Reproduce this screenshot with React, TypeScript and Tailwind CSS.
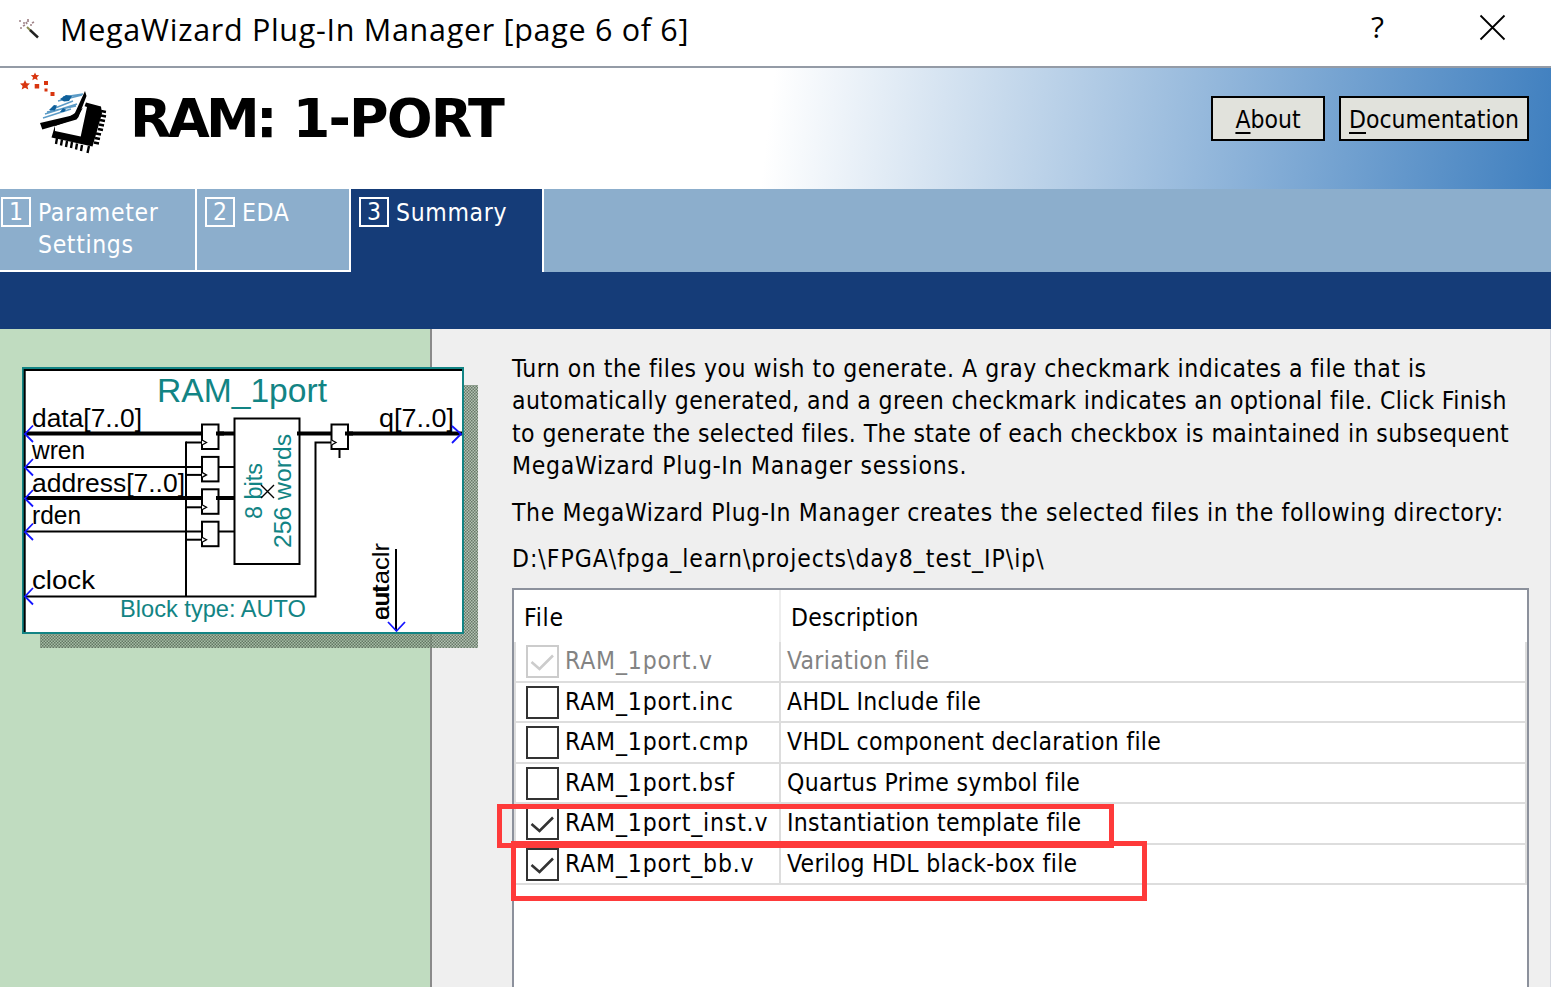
const tabs = [
  { num: 1, label: "Parameter\nSettings", cls: "w-[197px] pl-px border-b-2" },
  { num: 2, label: "EDA", cls: "w-[154px] pl-2 border-b-2" },
  { num: 3, label: "Summary", cls: "w-[193px] pl-2 bg-[#153c78]" },
];

const files = [
  { name: "RAM_1port.v", desc: "Variation file", checked: true, disabled: true },
  { name: "RAM_1port.inc", desc: "AHDL Include file" },
  { name: "RAM_1port.cmp", desc: "VHDL component declaration file" },
  { name: "RAM_1port.bsf", desc: "Quartus Prime symbol file" },
  { name: "RAM_1port_inst.v", desc: "Instantiation template file", checked: true },
  { name: "RAM_1port_bb.v", desc: "Verilog HDL black-box file", checked: true },
];

const ports = [
  { name: "data[7..0]", y: 433.5, bus: true, len: 110 },
  { name: "wren", y: 467, bus: false, len: 53 },
  { name: "address[7..0]", y: 498, bus: true, len: 153 },
  { name: "rden", y: 531.5, bus: false, len: 49 },
];

function WandIcon() {
  return (
    <svg width="22" height="22" viewBox="0 0 22 22" className="shrink-0">
      <path d="M9 9l4 4" stroke="#8a8a50" strokeWidth="2" />
      <path d="M12 12l8 7.500" stroke="#222" strokeWidth="2.400" />
      <path
        d="M1 3h2M5 5h2M10 1v3M14 5l2-1M2 10h2M5 8l2-1M12 7h2M8 4l1 2"
        stroke="#a08488"
        strokeWidth="1.700"
      />
    </svg>
  );
}

function ChipLogo() {
  return (
    <svg width="98" height="98" viewBox="17 68 98 98" className="shrink-0">
      <g fill="#d8350f">
        <path d="M25 80l1.500 3.300 3.500.3-2.600 2.300.9 3.600-3.300-1.800-3.300 1.800.9-3.600-2.600-2.300 3.500-.3z" />
        <path d="M35 72.500l1.200 2.600 3 .2-2.200 2 .7 3-2.700-1.500-2.700 1.500.7-3-2.200-2 3-.2z" />
        <path d="M34.700 84h4.500v4.500h-4.500zM44 81h4v4h-4zM44.500 88.500h3v3h-3zM50.500 92h4v4h-4z" />
      </g>
      <path d="M86 102.500l15 4 1 7-9.500 33-41-9 3.500-12 29-18z" fill="#000" />
      <path d="M55 126l22-8 7-12 3 1-6.300 29.500L55 131z" fill="#fff" />
      <path
        d="M101 111l5 1M101 115.500l5 1M100 120l5 1M99 124.500l5 1M98 129l5 1M96 133.500l5 1M95 138l5 1M94 142.500l5 1M57 138l-1 6M62 139.500l-1 6M67 141l-1 6M72 142l-1 6M77 143.500l-1 6M82 145l-1 6M89 146l-1.500 7"
        stroke="#000"
        strokeWidth="2.400"
      />
      <path
        d="M43 118l28-9M45 114l32-10M50 110l23-9M58 101l24-6M63 97l20-3M47 112l29-6"
        stroke="#5c9bc6"
        strokeWidth="1.400"
      />
      <path d="M60 99l6-4 6 1-3 5-5 .5zM49 110l5-5 3 .5-2 5zM60 112l3-4 3 1.500-2 2.500z" fill="#0f609b" />
      <path d="M40 123l34-8 11-24 1.500 5-8 21-2 2.500-34.200 10z" fill="#000" />
    </svg>
  );
}

function CheckBox({ checked, disabled }: { checked?: boolean; disabled?: boolean }) {
  return (
    <svg
      width="33"
      height="33"
      viewBox="0 0 33 33"
      fill="none"
      className={disabled ? "shrink-0 text-[#cccccc]" : "shrink-0 text-[#333333]"}
    >
      <rect x="1" y="1" width="31" height="31" fill="white" stroke="currentColor" strokeWidth="2" />
      {checked && <path d="M5.500 17l8 7L27 10.500" stroke="currentColor" strokeWidth="2.600" />}
    </svg>
  );
}

function Register({ x, y }: { x: number; y: number }) {
  return (
    <g fill="white" stroke="black" strokeWidth="2">
      <rect x={x} y={y} width="16.500" height="24.500" />
      <path d={`M${x} ${y + 15.5}l4.500 2.500-4.500 2.500`} strokeWidth="1.300" />
    </g>
  );
}

function SymbolBlock() {
  return (
    <svg
      width="460"
      height="285"
      viewBox="20 365 460 285"
      fill="none"
      className="absolute left-5 top-9 font-['Liberation_Sans'] [font-stretch:normal]"
    >
      <defs>
        <pattern id="dither" width="3" height="3" patternUnits="userSpaceOnUse">
          <rect width="1.500" height="1.500" fill="#405040" />
          <rect x="1.500" y="1.500" width="1.500" height="1.500" fill="#405040" />
        </pattern>
      </defs>
      <path d="M464 385h14v263H40v-14h424z" fill="#9aaf9a" fillOpacity=".7" />
      <path d="M464 385h14v263H40v-14h424z" fill="url(#dither)" fillOpacity=".65" />
      <rect x="23" y="368" width="440" height="265" fill="white" stroke="#128484" strokeWidth="2" />
      <path d="M24.700 632V370H462" stroke="black" strokeWidth="2" />

      <g fill="#128484">
        <text x="157" y="401.500" fontSize="33" textLength="170" lengthAdjust="spacingAndGlyphs">RAM_1port</text>
        <text x="120" y="617" fontSize="24" textLength="186" lengthAdjust="spacingAndGlyphs">Block type: AUTO</text>
        <text transform="translate(262 519) rotate(-90)" fontSize="23" textLength="56" lengthAdjust="spacingAndGlyphs">8 bits</text>
        <text transform="translate(290.500 548) rotate(-90)" fontSize="23" textLength="114" lengthAdjust="spacingAndGlyphs">256 words</text>
      </g>

      {ports.map((p, i) => (
        <g key={p.name}>
          <path d={`M24 ${p.y}H202M218 ${p.y}H234`} stroke="black" strokeWidth={p.bus ? 4 : 2} />
          <path d={`M186 ${442.5 + i * 32.4}H202`} stroke="black" strokeWidth="2" />
          <Register x={202} y={424.5 + i * 32.4} />
          {p.bus && <path d={`M216 ${p.y}h8`} stroke="black" strokeWidth="4" />}
          <text x="32" y={427 + i * 32.4} fontSize="25" fill="black" textLength={p.len} lengthAdjust="spacingAndGlyphs">
            {p.name}
          </text>
          <path d={`M33 ${p.y - 8}l-8 8.500 8 8`} stroke="#1414ff" strokeWidth="1.800" />
        </g>
      ))}

      <path d="M186 441.500V596M24 596.500H315.500V442.500H332" stroke="black" strokeWidth="2" />
      <path d="M33 588l-8 8.500 8 8" stroke="#1414ff" strokeWidth="1.800" />
      <text x="32" y="589" fontSize="25" fill="black" textLength="63" lengthAdjust="spacingAndGlyphs">clock</text>

      <rect x="234.500" y="418.500" width="65" height="145.500" stroke="black" strokeWidth="2" />
      <path d="M261 485l13 13M274 485l-13 13" stroke="black" strokeWidth="1.400" />

      <path d="M297 433.500H332M344 433.500H462" stroke="black" strokeWidth="4" />
      <Register x={331.5} y={424.5} />
      <path d="M345 433.500h8" stroke="black" strokeWidth="4" />
      <path d="M339.500 449v9" stroke="black" strokeWidth="2" />
      <text x="379" y="427" fontSize="25" fill="black" textLength="75" lengthAdjust="spacingAndGlyphs">q[7..0]</text>
      <path d="M452 426l9 8-9 9" stroke="#1414ff" strokeWidth="1.800" />

      <path d="M396 549v82" stroke="black" strokeWidth="2" />
      <path d="M388 622l8.500 9 8.500-9" stroke="#1414ff" strokeWidth="1.800" />
      <g fill="black">
        <text transform="translate(389 620) rotate(-90)" fontSize="24" textLength="34" lengthAdjust="spacingAndGlyphs">out</text>
        <text transform="translate(389 620) rotate(-90)" fontSize="24" textLength="77" lengthAdjust="spacingAndGlyphs">autaclr</text>
      </g>
    </svg>
  );
}

export default function App() {
  return (
    <div className="flex h-[987px] w-[1551px] flex-col overflow-hidden bg-white font-['DejaVu_Sans_Condensed','DejaVu_Sans',sans-serif] text-[24.500px] leading-[32.400px] text-black [font-stretch:condensed]">
      <header className="flex h-[66px] shrink-0 items-center pb-2 pl-[18px] pr-[45px] font-['Open_Sans',sans-serif] [font-stretch:normal]">
        <WandIcon />
        <h1 className="ml-5 whitespace-pre text-[30.500px] tracking-[0.700px]">MegaWizard Plug-In Manager [page 6 of 6]</h1>
        <span className="ml-auto mr-[95px] -mt-1 text-[30px]">?</span>
        <svg width="27" height="27" viewBox="0 0 27 27" stroke="black" strokeWidth="1.800" className="-mt-1">
          <path d="M1.500 1.500l24 24M25.500 1.500l-24 24" />
        </svg>
      </header>

      <div className="flex h-[123px] shrink-0 items-start border-t-2 border-[#949ba6] bg-[linear-gradient(97deg,#ffffff_49.500%,#3f7fbf_100%)] pl-[17px] pr-[22px]">
        <ChipLogo />
        <h2 className="ml-[15px] mt-[26px] text-[54px] font-bold leading-[50px] tracking-[-1.900px] [font-stretch:normal] font-['DejaVu_Sans']">
          <span className="tracking-[-3.700px]">RAM:</span> <span className="ml-0.5">1-PORT</span>
        </h2>
        <div className="ml-auto mt-7 flex gap-3.5">
          <button className="h-[45px] w-[114px] border-2 border-black bg-[#e1e2dc] pt-1">
            <span className="underline decoration-2 underline-offset-4">A</span>bout
          </button>
          <button className="h-[45px] w-[190px] border-2 border-black bg-[#e1e2dc] pt-1">
            <span className="underline decoration-2 underline-offset-4">D</span>ocumentation
          </button>
        </div>
      </div>

      <nav className="flex h-[83px] shrink-0 bg-[#8caecc] text-white">
        {tabs.map((t) => (
          <div key={t.num} className={`flex items-start gap-[7px] border-r-2 border-white pt-2 ${t.cls}`}>
            <span className="flex h-[30px] w-[30px] shrink-0 items-center justify-center border-2 border-white">{t.num}</span>
            <span className="whitespace-pre tracking-[0.650px]">{t.label}</span>
          </div>
        ))}
      </nav>
      <div className="h-[57px] shrink-0 bg-[#153c78]" />

      <main className="relative flex min-h-0 grow border-r border-[#d4d7df] bg-[#efefef]">
        <aside className="w-[432px] shrink-0 border-r-2 border-[#8a8a8a] bg-[#c0dcc0]" />
        <SymbolBlock />

        <section className="ml-[80px] flex w-[1017px] shrink-0 flex-col whitespace-pre pt-6">
          <p className="tracking-[0.500px]">Turn on the files you wish to generate. A gray checkmark indicates a file that is</p>
          <p className="tracking-[0.400px]">automatically generated, and a green checkmark indicates an optional file. Click Finish</p>
          <p className="tracking-[0.420px]">to generate the selected files. The state of each checkbox is maintained in subsequent</p>
          <p className="tracking-[0.740px]">MegaWizard Plug-In Manager sessions.</p>
          <p className="mt-3.5 tracking-[0.600px]">The MegaWizard Plug-In Manager creates the selected files in the following directory:</p>
          <p className="mt-3.5 tracking-[0.970px]">D:\FPGA\fpga_learn\projects\day8_test_IP\ip\</p>

          <div className="mt-[13px] grow border-2 border-b-0 border-[#8c919c] bg-white">
            <div className="flex h-[52px] items-center">
              <div className="flex h-full w-[267px] items-center border-r-2 border-[#eeeeee] pl-2.5 pt-[3px] tracking-[0.800px]">File</div>
              <div className="pl-2.5 pt-[3px] tracking-[0.200px]">Description</div>
            </div>
            <div className="border-x-2 border-[#dddddd]">
              {files.map((f) => (
                <div
                  key={f.name}
                  className={`flex h-[40.500px] items-center border-b-2 border-[#dddddd] ${f.disabled ? "text-[#838383]" : "text-black"}`}
                >
                  <div className="flex h-full w-[265px] items-center gap-1.5 border-r-2 border-[#dddddd] pl-2.5">
                    <CheckBox checked={f.checked} disabled={f.disabled} />
                    <span className="tracking-[0.840px]">{f.name}</span>
                  </div>
                  <span className="pl-1.5 tracking-[0.320px]">{f.desc}</span>
                </div>
              ))}
            </div>
          </div>
        </section>

        {/* highlights round the two generated templates */}
        <div className="absolute left-[497px] top-[475px] h-[44px] w-[617px] border-[5.500px] border-[#fe3a3a]" />
        <div className="absolute left-[511px] top-[512px] h-[60px] w-[636px] border-[5.500px] border-[#fe3a3a]" />
      </main>
    </div>
  );
}
